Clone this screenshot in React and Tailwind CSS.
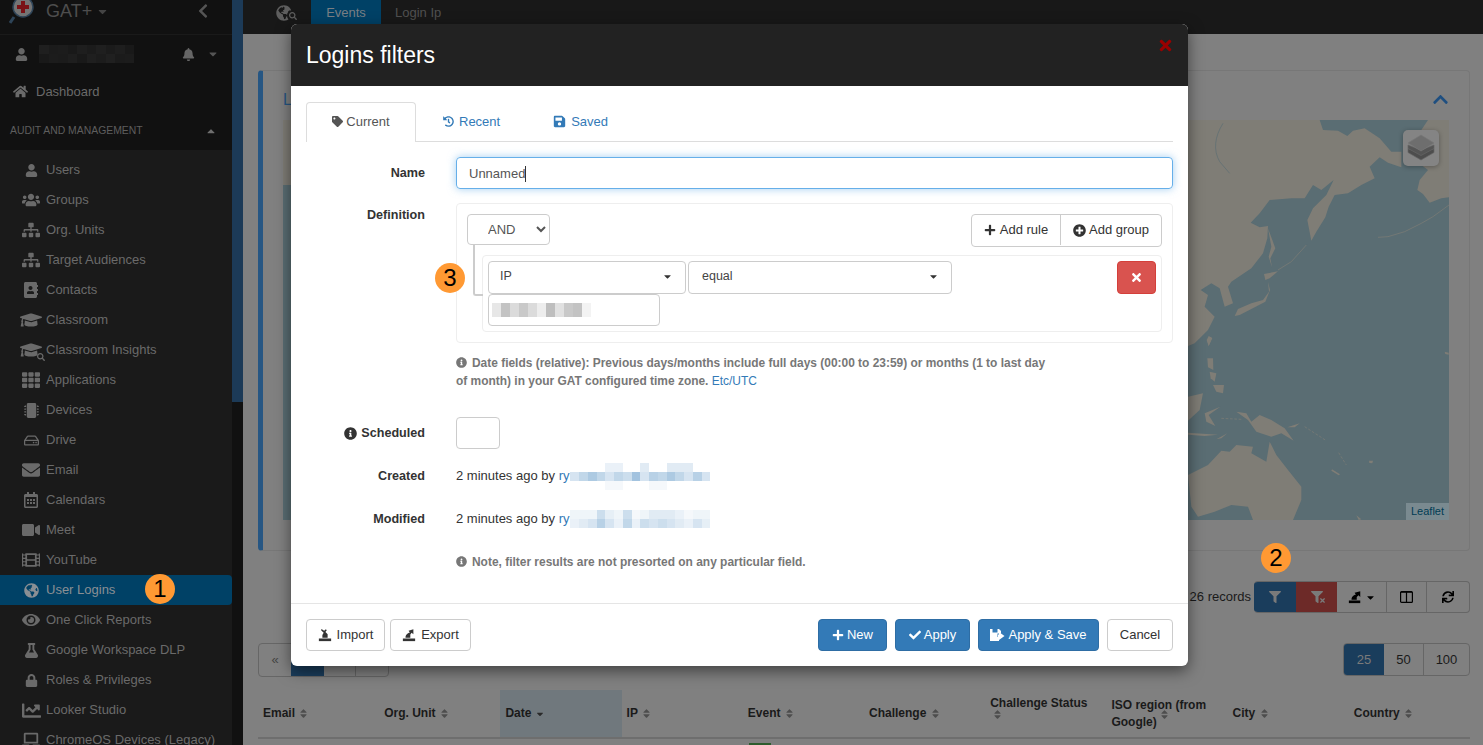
import React from "react";
import {
  FaUser, FaUsers, FaSitemap, FaAddressBook, FaGraduationCap, FaTh, FaMicrochip, FaRegHdd, FaEnvelope,
  FaRegCalendarAlt, FaVideo, FaFilm, FaGlobeAmericas, FaEye, FaFlask, FaLock, FaChartLine, FaLaptop, FaHome,
  FaBell, FaCaretDown, FaCaretUp, FaChevronLeft, FaChevronUp, FaTag, FaHistory, FaSave, FaPlus, FaPlusCircle,
  FaTimes, FaInfoCircle, FaCheck, FaFilter, FaSync, FaSort, FaSearch,
} from "react-icons/fa";

const items = [
  ["Users", <FaUser size={13} />],
  ["Groups", <FaUsers size={18} />],
  ["Org. Units", <FaSitemap size={18} />],
  ["Target Audiences", <FaSitemap size={18} />],
  ["Contacts", <FaAddressBook size={16} />],
  ["Classroom", <FaGraduationCap size={22} />],
  ["Classroom Insights", <span className="relative flex"><FaGraduationCap size={22} /><FaSearch size={8} className="absolute -right-[3px] bottom-0" /></span>],
  ["Applications", <FaTh size={18} />],
  ["Devices", <FaMicrochip size={15} />],
  ["Drive", <FaRegHdd size={15} />],
  ["Email", <FaEnvelope size={18} />],
  ["Calendars", <FaRegCalendarAlt size={16} />],
  ["Meet", <FaVideo size={18} />],
  ["YouTube", <FaFilm size={18} />],
  ["User Logins", <FaGlobeAmericas size={15} />],
  ["One Click Reports", <FaEye size={18} />],
  ["Google Workspace DLP", <FaFlask size={15} />],
  ["Roles & Privileges", <FaLock size={13} />],
  ["Looker Studio", <FaChartLine size={19} />],
  ["ChromeOS Devices (Legacy)", <FaLaptop size={18} />],
];

function Pixels({ rows, cell = 9, h = 9, color }) {
  return (
    <div className="flex flex-col">
      {rows.map((r, i) => (
        <div key={i} className="flex">
          {r.map((o, j) => (
            <div key={j} style={{ width: cell, height: h, background: color, opacity: o }} />
          ))}
        </div>
      ))}
    </div>
  );
}

function Sidebar() {
  return (
    <aside className="w-[232px] h-[745px] shrink-0 flex flex-col bg-[#1a1a1a] text-[#6a6a6a] overflow-hidden">
      <div className="bg-[#111] h-[150px] shrink-0 flex flex-col">
        <div className="h-[35px] shrink-0 flex items-center border-b border-[#1a1a1a] pb-[12px] pl-[9px] pr-[21px]">
          <svg width="26" height="27" viewBox="0 0 26 27" className="shrink-0">
            <line x1="5" y1="19" x2="1" y2="25" stroke="#2e4458" strokeWidth="3" />
            <circle cx="14" cy="9" r="10" fill="#747474" stroke="#2e4458" strokeWidth="1.5" />
            <path d="M12 3h4v4h4v4h-4v4h-4v-4H8V7h4z" fill="#7a1216" />
          </svg>
          <span className="ml-[11px] text-[18px] leading-none text-[#4d4d4d]">GAT+</span>
          <FaCaretDown size={13} className="ml-[4px] text-[#444]" />
          <FaChevronLeft size={16} className="ml-auto text-[#555]" />
        </div>
        <div className="h-[38px] shrink-0 flex items-center pl-[15px] pr-[13px]">
          <FaUser size={13} className="text-[#666]" />
          <div className="ml-[11px]">
            <Pixels color="#2e2e2e" cell={9.5} rows={[[.5,.35,.4,.3,.45,.35,.5,.35,.45,.3],[.3,.4,.35,.45,.3,.5,.4,.55,.35,.4]]} />
          </div>
          <FaBell size={13} className="ml-auto mr-[12px] text-[#666]" />
          <FaCaretDown size={12} className="text-[#555]" />
        </div>
        <div className="h-[36px] shrink-0 flex items-center pl-[13px] pt-[1px] text-[13px]">
          <FaHome size={15} />
          <span className="ml-[8px]">Dashboard</span>
        </div>
        <div className="h-[41px] shrink-0 flex items-center pl-[10px] pr-[15px] pt-[3px] text-[10.4px] uppercase text-[#5e5e5e]">
          <span>Audit and Management</span>
          <FaCaretUp size={12} className="ml-auto text-[#6e6e6e]" />
        </div>
      </div>
      <nav className="pt-[5px] flex flex-col text-[13px]">
        {items.map(([label, icon]) => {
          const active = label === "User Logins";
          return (
            <div key={label} className={`h-[30px] shrink-0 flex items-center pl-[16px] ${active ? "bg-[#004166] rounded-r-[4px] text-[#8a8f94]" : ""}`}>
              <span className="w-[30px] flex justify-center shrink-0">{icon}</span>
              <span className="whitespace-nowrap">{label}</span>
            </div>
          );
        })}
      </nav>
    </aside>
  );
}

function MapArt() {
  const land = "#7f7d76";
  const water = "#5a6d73";
  return (
    <svg viewBox="0 0 1166 400" width="1166" height="400" className="block">
      <rect width="1166" height="400" fill={water} />
      <rect width="20" height="65" fill={land} />
      <g transform="translate(905,-10) scale(.33333)" fill={land}>
        <path d="M0 30H395L405 60L450 62L478 78L495 62L530 55L575 85L610 125L640 125L640 172L600 158L575 142L545 170L560 205L520 225L480 250L440 255L422 290L412 322L385 365L370 392L358 330L375 295L415 255L437 210L400 240L375 225L350 265L310 265L245 270L215 310L188 338L215 352L240 348L238 385L225 430L190 475L130 515L120 530L135 580L110 590L95 535L70 520L38 540L60 555L50 590L80 620L60 660L20 700L0 708Z" />
        <path d="M720 30H783V262L760 265L725 278L705 252L688 240L695 210L720 180L700 165L700 60Z" />
        <path d="M240 515L243 545L225 570L190 580L150 597L140 618L155 615L190 597L232 575L246 540Z" />
        <path d="M228 492L270 484L245 505L232 510Z" />
        <path d="M240 355L262 415L247 445L252 472L242 440L250 410Z" />
        <path d="M65 680L72 685L62 708L57 690Z" />
      </g>
      <g transform="translate(905,-10) scale(.33333)" fill="none" stroke={land} strokeWidth="2">
        <path d="M783 285L735 320L700 340L650 365L600 380L570 382" />
        <path d="M270 480L310 455L355 405" />
      </g>
      <path transform="translate(905,-10) scale(.33333)" d="M105 40C80 80 75 120 95 155L125 190" fill="none" stroke={water} strokeWidth="2" />
      <g transform="translate(905,210) scale(.33333)" fill={land}>
        <path d="M0 435L60 405L100 362L125 365L145 345L195 350L190 370L235 395L245 335L265 375L300 420L340 470L340 510L315 570H195L180 530L130 525L80 545L30 560L10 530Z" />
        <path d="M145 245L175 250L190 275L215 255L250 270L290 295L317 332L280 310L250 320L205 305L180 270Z" />
        <path d="M0 200L45 190L35 240L0 272Z" />
        <path d="M50 250L97 230L62 255L82 288L55 275Z" />
        <path d="M58 85L75 85L76 120L60 112Z" />
        <path d="M75 165L108 165L105 190L85 185Z" />
        <path d="M65 125L85 130L80 155L68 145Z" />
        <path d="M62 18L73 24L62 48L56 30Z" />
        <path d="M0 308L90 314L50 318L0 314Z" />
        <path d="M85 328L118 310L100 325Z" />
        <path d="M432 418L456 433L452 436L430 422Z" />
        <path d="M543 392L555 392L553 400L544 399Z" />
        <path d="M505 556L520 568L512 570Z" />
        <path d="M298 292L335 280L320 292Z" />
        <path d="M770 65L782 68L782 74L772 72Z" />
      </g>
      <g transform="translate(905,210) scale(.33333)" fill="none" stroke={land} strokeWidth="2" strokeDasharray="8 5">
        <path d="M350 290L415 332" />
        <path d="M452 368L475 405" />
        <path d="M100 265L160 268" />
      </g>
    </svg>
  );
}

function Content() {
  const cols = [
    ["Email"], ["Org. Unit"], ["Date", "sorted"], ["IP"], ["Event"], ["Challenge"],
    ["Challenge Status", "below"], ["ISO region (from Google)", "mid"], ["City"], ["Country"],
  ];
  return (
    <main className="flex-1 min-w-0 bg-[#808080] flex flex-col">
      <div className="h-[34px] shrink-0 bg-[#181818] flex text-[13px]">
        <div className="w-[68px] flex justify-center items-center pb-[8px] pl-[14px] text-[#5e5e5e] relative">
          <FaGlobeAmericas size={16} />
          <span className="absolute left-[44px] top-[10px] w-[11px] h-[11px] rounded-full bg-[#181818] flex items-center justify-center">
            <FaSearch size={8} />
          </span>
        </div>
        <div className="w-[70px] bg-[#004166] flex items-center justify-center pb-[8px] text-[#7a7f84]">Events</div>
        <div className="ml-[14px] flex items-center pb-[8px] text-[#505050]">Login Ip</div>
      </div>
      <div className="pl-[15px] pr-[13px] pt-[36px] flex flex-col">
        <section className="h-[481px] shrink-0 border border-[#777] border-l-[5px] border-l-[#265683] rounded-[4px] pl-[20px] pr-[20px]">
          <div className="h-[49px] flex items-center justify-between pt-[8px] text-[#265683]">
            <span className="text-[16px]">Logins</span>
            <FaChevronUp size={17} className="text-[#1f4f80]" />
          </div>
          <div className="relative w-[1166px] h-[400px] overflow-hidden">
            <MapArt />
            <div className="absolute right-[10px] top-[10px] w-[36px] h-[36px] rounded-[5px] bg-[#848484] shadow-[0_1px_5px_rgba(0,0,0,0.3)] flex items-center justify-center">
              <svg width="28" height="28" viewBox="0 0 28 28">
                <path d="M14 19L27 14.500L27 18.500L14 26L1 18.500L1 14.500Z" fill="#4d4d4d" stroke="#666" strokeWidth=".7" />
                <path d="M14 16L27 11L27 14.500L14 21.500L1 14.500L1 11Z" fill="#555" stroke="#666" strokeWidth=".7" />
                <path d="M14 1L27 9L14 17L1 9Z" fill="#6e6e6e" stroke="#777" strokeWidth=".7" />
              </svg>
            </div>
            <div className="absolute right-0 bottom-0 h-[17px] w-[43px] bg-[#7a8a90] flex items-center justify-center text-[11px] text-[#003c54]">Leaflet</div>
          </div>
        </section>

        <div className="mt-[30px] h-[32px] flex items-center justify-end text-[13px] text-[#1a1a1a]">
          <span className="mr-[3px]">26 records</span>
          <div className="flex h-[32px] w-[216px] border border-[#666] rounded-[4px] overflow-hidden border-l-0">
            <div className="w-[42px] bg-[#1a3d5c] flex items-center justify-center text-[#7a7a7a]"><FaFilter size={12} /></div>
            <div className="w-[41px] bg-[#6d2a28] flex items-center justify-center text-[#7a7a7a] relative">
              <FaFilter size={12} />
              <FaTimes size={7} className="absolute left-[23px] top-[15px]" />
            </div>
            <div className="w-[50px] border-r border-[#666] flex items-center justify-center gap-[3px] text-black">
              <svg width="14" height="14" viewBox="0 0 16 16" fill="currentColor"><rect x="1" y="12" width="13" height="3" /><path d="M4 11C4 7 7 5.500 9 5L7.500 3L14 1.500L14 8L12 6L10 8V11Z" /></svg>
              <FaCaretDown size={11} />
            </div>
            <div className="w-[40px] border-r border-[#666] flex items-center justify-center text-black">
              <svg width="13" height="12" viewBox="0 0 13 12" fill="none" stroke="currentColor" strokeWidth="1.2"><rect x=".6" y=".6" width="11.800" height="10.800" rx="1" /><line x1="6.500" y1="1" x2="6.500" y2="11" /><line x1="1" y1="1.200" x2="12" y2="1.200" /></svg>
            </div>
            <div className="flex-1 flex items-center justify-center text-black"><FaSync size={12} /></div>
          </div>
        </div>

        <div className="mt-[30px] h-[34px] flex justify-between text-[13px] text-[#1a1a1a]">
          <div className="flex h-[34px] border border-[#666] rounded-[4px] overflow-hidden">
            <div className="w-[32px] flex items-center justify-center text-[#444]">«</div>
            <div className="w-[33px] bg-[#1a3d5c]" />
            <div className="w-[32px] border-r border-[#666]" />
            <div className="w-[32px]" />
          </div>
          <div className="flex h-[33px] border border-[#666] rounded-[4px] overflow-hidden">
            <div className="w-[40px] bg-[#1a3d5c] text-[#7a7a7a] flex items-center justify-center">25</div>
            <div className="w-[40px] border-r border-[#666] flex items-center justify-center">50</div>
            <div className="w-[45px] flex items-center justify-center">100</div>
          </div>
        </div>

        <div className="mt-[13px] grid grid-cols-10 h-[47px] border-b-[2px] border-[#6e6e6e] text-[12px] font-bold text-[#1a1a1a] box-content">
          {cols.map(([label, kind]) => (
            <div key={label} className={`relative px-[5px] pb-[1px] flex items-center ${kind === "sorted" ? "bg-[#70787d]" : ""}`}>
              {kind === "below" || kind === "mid" ? (
                <>
                  <span className={`leading-[17px] ${kind === "below" ? "self-start pt-[5px]" : "pt-[2px]"}`}>{label}</span>
                  <FaSort size={11} className={`absolute top-[19px] text-[#4d4d4d] ${kind === "below" ? "left-[7px]" : "left-[53px]"}`} />
                </>
              ) : (
                <span>
                  {label}{" "}
                  {kind === "sorted" ? <FaCaretDown size={10} className="inline text-[#2a2a2a]" /> : <FaSort size={11} className="inline text-[#4d4d4d]" />}
                </span>
              )}
            </div>
          ))}
        </div>
        <div className="grid grid-cols-10 h-[8px]">
          <div className="col-start-5 pl-[6px] pt-[4px]"><div className="w-[22px] h-[4px] bg-[#2e5c2e]" /></div>
        </div>
      </div>
    </main>
  );
}

function Btn({ children, primary, className = "" }) {
  return (
    <button className={`h-[32px] rounded-[4px] border flex items-center justify-center gap-[3px] text-[13px] ${primary ? "bg-[#337ab7] border-[#2e6da4] text-white" : "bg-white border-[#ccc] text-[#333]"} ${className}`}>
      {children}
    </button>
  );
}

function Sel({ label, className, textClass = "" }) {
  return (
    <div className={`h-[33px] border border-[#ccc] rounded-[4px] flex items-center justify-between pl-[11px] pr-[12px] pb-[2px] text-[12.500px] text-[#444] bg-white ${className}`}>
      <span className={textClass}>{label}</span>
      <FaCaretDown size={11} className="text-[#333]" />
    </div>
  );
}

const Label = ({ children, className = "" }) => (
  <div className={`w-[119px] shrink-0 text-right font-bold text-[12.600px] text-[#333] ${className}`}>{children}</div>
);

const ImportIcon = () => (
  <svg width="14" height="14" viewBox="0 0 16 16" fill="currentColor"><rect x="1" y="12" width="14" height="3" /><path d="M4 1L7 3L9 1.500L10 2.500L8.500 4.500L11 7V11H5V8L6.500 5.500L3.500 2.500Z" /></svg>
);
const ExportIcon = () => (
  <svg width="14" height="14" viewBox="0 0 16 16" fill="currentColor"><rect x="1" y="12" width="14" height="3" /><path d="M4 11C4 7 7 5.500 9 5L7.500 3L13 1.500L13 7L11 5.500L9.500 7.500V11Z" /></svg>
);
const SaveArrowIcon = () => (
  <svg width="15" height="14" viewBox="0 0 15 14" fill="currentColor"><path d="M0 1H9L11 3V5.500H7.500V9H9V13H0ZM2.500 1V4.500H7.500V1Z" fillRule="evenodd" /><path d="M9 6.500V4L14.500 8L9 12V9.500H8V6.500Z" /></svg>
);

function UserLink({ rows }) {
  return (
    <div className="flex items-center text-[13px] text-[#333]">
      <span>2 minutes ago by <span className="text-[#337ab7]">ry</span></span>
      <div className="ml-[1px]"><Pixels color="#337ab7" cell={8.750} rows={rows} /></div>
    </div>
  );
}

function Modal() {
  return (
    <div className="absolute left-[291px] top-[24px] w-[897px] h-[642px] bg-white rounded-[6px] shadow-[0_5px_15px_rgba(0,0,0,0.5)] flex flex-col overflow-hidden text-[13px] text-[#333]">
      <header className="h-[62px] shrink-0 bg-[#222] flex items-center justify-between pl-[15px] pr-[14px]">
        <h2 className="text-[23px] leading-none text-white">Logins filters</h2>
        <FaTimes size={17} className="text-[#990000] mb-[19px]" />
      </header>
      <div className="flex-1 px-[15px] pt-[16px] flex flex-col">
        <div className="h-[40px] shrink-0 flex border-b border-[#ddd]">
          <div className="w-[110px] h-[40px] pb-[2px] bg-white border border-[#ddd] border-b-0 rounded-t-[4px] flex items-center justify-center gap-[3px] text-[#555]">
            <FaTag size={11} /> Current
          </div>
          <div className="ml-[27px] flex items-center gap-[5px] text-[#337ab7]"><FaHistory size={11} /> Recent</div>
          <div className="ml-[53px] flex items-center gap-[5px] text-[#337ab7]"><FaSave size={13} /> Saved</div>
        </div>

        <div className="mt-[15px] flex h-[32px] items-center">
          <Label>Name</Label>
          <div className="ml-[31px] flex-1 h-[32px] border border-[#66afe9] rounded-[4px] shadow-[0_0_8px_rgba(102,175,233,0.6)] flex items-center pl-[12px] pt-[1px] text-[#555]">
            <span className="border-r border-[#333] leading-[16px]">Unnamed</span>
          </div>
        </div>

        <div className="mt-[14px] flex">
          <Label className="pt-[3px]">Definition</Label>
          <div className="ml-[31px] flex-1 h-[140px] border border-[#eee] rounded-[4px] pl-[10px] pr-[10px] pt-[10px] flex flex-col">
            <div className="flex justify-between h-[33px]">
              <select defaultValue="AND" className="w-[83px] h-[31px] border border-[#ccc] rounded-[4px] bg-white pl-[16px] text-[13px] text-[#555] font-['Liberation_Sans',sans-serif]">
                <option>AND</option>
                <option>OR</option>
              </select>
              <div className="flex h-[33px] border border-[#ccc] rounded-[4px] text-[13px] pb-[1px]">
                <div className="w-[89px] border-r border-[#ccc] flex items-center justify-center gap-[4px]"><FaPlus size={12} /> Add rule</div>
                <div className="w-[100px] flex items-center justify-center gap-[3px]"><FaPlusCircle size={13} /> Add group</div>
              </div>
            </div>
            <div className="relative mt-[8px] ml-[15px] h-[77px] border border-[#eee] rounded-[4px] pl-[5px] pr-[5px] pt-[5px]">
              <div className="absolute left-[-10px] top-[-11px] w-[10px] h-[51px] border-l-2 border-b-2 border-[#ccc] rounded-bl-[3px]" />
              <div className="flex">
                <Sel label="IP" className="w-[198px]" />
                <Sel label="equal" className="w-[264px] ml-[2px]" textClass="ml-[2px]" />
                <button className="ml-auto h-[33px] w-[39px] rounded-[4px] bg-[#d9534f] border border-[#d43f3a] text-white flex items-center justify-center"><FaTimes size={13} /></button>
              </div>
              <div className="w-[172px] h-[32px] border border-[#ccc] rounded-[4px] flex items-center pl-[3px]">
                <Pixels color="#888" rows={[[.2,.5,.3,.45,.3,.15,.55,.25,.45,.5,.1]]} h={14} />
              </div>
            </div>
          </div>
        </div>

        <div className="mt-[11px] ml-[150px] w-[600px] text-[11.950px] font-bold leading-[18px] text-[#777]">
          <FaInfoCircle size={11} className="inline mb-[2px] mr-[5px]" />
          Date fields (relative): Previous days/months include full days (00:00 to 23:59) or months (1 to last day of month) in your GAT configured time zone. <span className="text-[#337ab7] font-normal">Etc/UTC</span>
        </div>

        <div className="mt-[27px] flex items-center h-[32px]">
          <Label className="flex items-center justify-end gap-[4px] pt-[1px]"><FaInfoCircle size={13} /> Scheduled</Label>
          <div className="ml-[31px] w-[44px] h-[32px] border border-[#ccc] rounded-[4px]" />
        </div>
        <div className="mt-[15px] flex items-center h-[24px]">
          <Label>Created</Label>
          <div className="ml-[31px]">
            <UserLink rows={[[0,0,0,0,.1,.1,0,0,.15,0,0,.15,.15,.15,0,0],[.2,.3,.4,.3,.2,.3,.25,.45,.2,.35,.3,.4,.3,.2,.35,.2],[0,0,0,0,.05,.05,0,0,0,.05,.05,0,0,0,0,0]]} />
          </div>
        </div>
        <div className="mt-[19px] flex items-center h-[24px]">
          <Label>Modified</Label>
          <div className="ml-[31px]">
            <UserLink rows={[[.08,.08,.08,.25,.12,.08,.25,.05,.08,.15,.15,.15,.1,.05,.08,.08],[.1,.15,.2,.35,.2,.1,.3,.1,.25,.2,.25,.2,.15,.1,.2,.12]]} />
          </div>
        </div>
        <div className="mt-[22px] ml-[150px] text-[11.950px] font-bold leading-[18px] text-[#777]">
          <FaInfoCircle size={11} className="inline mb-[2px] mr-[5px]" />
          Note, filter results are not presorted on any particular field.
        </div>
      </div>
      <footer className="h-[63px] shrink-0 border-t border-[#e5e5e5] flex items-start pt-[15px] px-[15px]">
        <Btn className="w-[79px] gap-[5px]"><ImportIcon /> Import</Btn>
        <Btn className="w-[81px] ml-[5px] gap-[5px]"><ExportIcon /> Export</Btn>
        <Btn primary className="w-[69px] ml-auto"><FaPlus size={12} /> New</Btn>
        <Btn primary className="w-[75px] ml-[8px]"><FaCheck size={12} /> Apply</Btn>
        <Btn primary className="w-[121px] ml-[8px]"><SaveArrowIcon /> Apply & Save</Btn>
        <Btn className="w-[66px] ml-[8px]">Cancel</Btn>
      </footer>
    </div>
  );
}

function Badge({ n, className }) {
  return (
    <div className={`absolute w-[30px] h-[30px] rounded-full bg-[#ff9933] flex items-center justify-center text-[24px] leading-none text-black ${className}`}>{n}</div>
  );
}

export default function App() {
  return (
    <div className="relative w-[1483px] h-[745px] overflow-hidden flex font-['Liberation_Sans',Arial,sans-serif]">
      <Sidebar />
      <div className="w-[11px] shrink-0 h-[745px] bg-[#111] flex flex-col">
        <div className="h-[402px] bg-[#1c3a57]" />
      </div>
      <Content />
      <Modal />
      <Badge n="1" className="left-[145px] top-[574px]" />
      <Badge n="2" className="left-[1261px] top-[543px]" />
      <Badge n="3" className="left-[435px] top-[263px]" />
    </div>
  );
}
